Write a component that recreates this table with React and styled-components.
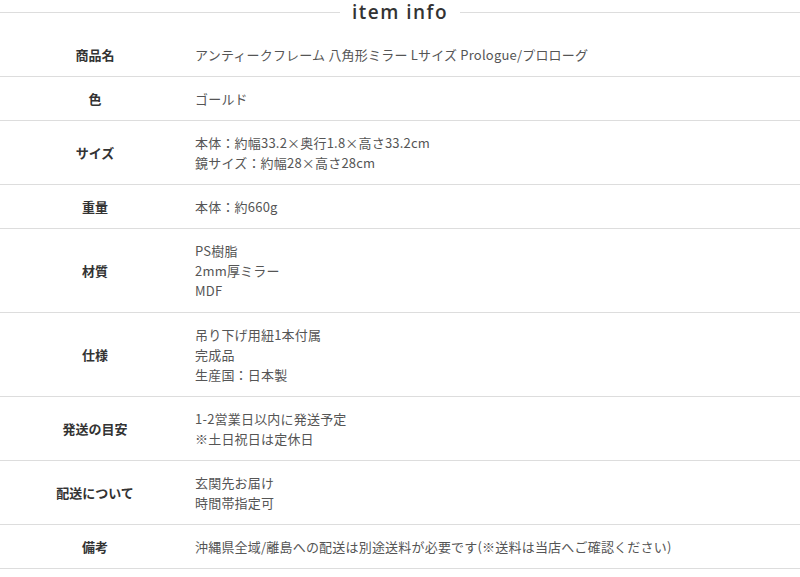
import React from "react";
import styled, { createGlobalStyle } from "styled-components";

const GlobalStyle = createGlobalStyle`
  body {
    margin: 0;
    background: #fff;
    font-family: "Noto Sans CJK JP", "Noto Sans", sans-serif;
  }
`;

const rows = [
  { label: "商品名", lines: ["アンティークフレーム 八角形ミラー Lサイズ Prologue/プロローグ"] },
  { label: "色", lines: ["ゴールド"] },
  { label: "サイズ", lines: ["本体：約幅33.2×奥行1.8×高さ33.2cm", "鏡サイズ：約幅28×高さ28cm"] },
  { label: "重量", lines: ["本体：約660g"] },
  { label: "材質", lines: ["PS樹脂", "2mm厚ミラー", "MDF"] },
  { label: "仕様", lines: ["吊り下げ用紐1本付属", "完成品", "生産国：日本製"] },
  { label: "発送の目安", lines: ["1-2営業日以内に発送予定", "※土日祝日は定休日"] },
  { label: "配送について", lines: ["玄関先お届け", "時間帯指定可"] },
  { label: "備考", lines: ["沖縄県全域/離島への配送は別途送料が必要です(※送料は当店へご確認ください)"] },
];

const Wrapper = styled.div`
  width: 800px;
`;

const Heading = styled.div`
  display: flex;
  align-items: center;
  gap: 12px;
  height: 25px;
  margin-bottom: 8px;

  &::before,
  &::after {
    content: "";
    flex: 1;
    height: 1px;
    background: #ddd;
  }
`;

const Title = styled.h2`
  margin: 0;
  font-family: "Open Sans", "DejaVu Sans", sans-serif;
  font-weight: 600;
  font-size: 19px;
  letter-spacing: 1.5px;
  line-height: 25px;
  color: #333;
`;

const Row = styled.div`
  display: grid;
  grid-template-columns: 190px 1fr;
  align-items: center;
  padding: 12px 0 11px;
  border-bottom: 1px solid #ddd;
`;

const Label = styled.div`
  text-align: center;
  font-size: 13px;
  font-weight: 700;
  color: #333;
  line-height: 20px;
`;

const Value = styled.div`
  padding-left: 5px;
  font-size: 13px;
  letter-spacing: 0.2px;
  color: #555;
  line-height: 20px;
`;

const App = () => (
  <Wrapper>
    <GlobalStyle />
    <Heading>
      <Title>item info</Title>
    </Heading>
    {rows.map((row) => (
      <Row key={row.label}>
        <Label>{row.label}</Label>
        <Value>
          {row.lines.map((line) => (
            <div key={line}>{line}</div>
          ))}
        </Value>
      </Row>
    ))}
  </Wrapper>
);

export default App;
